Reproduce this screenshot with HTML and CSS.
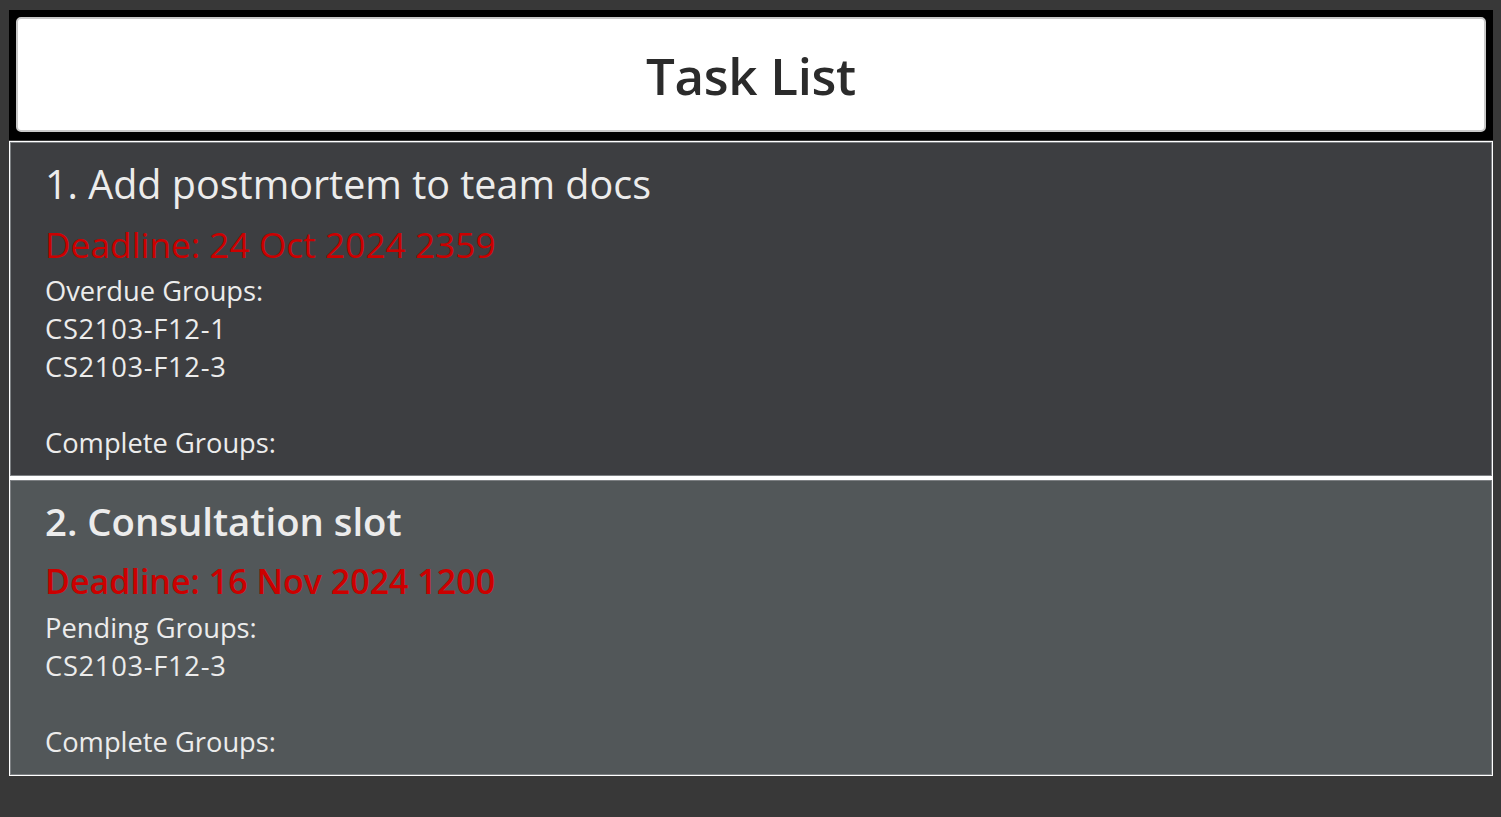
FILE: index.html
```html
<!DOCTYPE html>
<html>
<head>
<meta charset="utf-8">
<link rel="stylesheet" href="styles.css">
</head>
<body>
<div class="app">
  <div class="header-wrap">
    <div class="header">Task List</div>
  </div>
  <div class="list">
    <div class="card card-dark">
      <div class="title title-regular">1. Add postmortem to team docs</div>
      <div class="deadline deadline-regular">Deadline: 24 Oct 2024 2359</div>
      <div class="body">
        <div class="line">Overdue Groups:</div>
        <div class="line code">CS2103-F12-1</div>
        <div class="line code">CS2103-F12-3</div>
        <div class="line">&nbsp;</div>
        <div class="line">Complete Groups:</div>
      </div>
    </div>
    <div class="card card-light">
      <div class="title title-bold">2. Consultation slot</div>
      <div class="deadline deadline-bold">Deadline: 16 Nov 2024 1200</div>
      <div class="body">
        <div class="line">Pending Groups:</div>
        <div class="line code">CS2103-F12-3</div>
        <div class="line">&nbsp;</div>
        <div class="line">Complete Groups:</div>
      </div>
    </div>
  </div>
</div>
</body>
</html>
```
FILE: styles.css
```css
html, body {
  margin: 0;
  padding: 0;
  background: #383838;
  font-family: "Open Sans", "Noto Sans", sans-serif;
}

.app {
  padding: 10px 8px 0 9px;
  display: flex;
  flex-direction: column;
  gap: 1px;
}

.header-wrap {
  background: #000;
  padding: 7px 7px 8px 7px;
}

.header {
  height: 111px;
  background: #fff;
  border: 2px solid #c9c9c9;
  border-radius: 5px;
  box-sizing: content-box;
  display: flex;
  align-items: center;
  justify-content: center;
  color: #2b2b2b;
  font-size: 51px;
  font-weight: 600;
  letter-spacing: -0.3px;
}

.list {
  background: #fff;
  border: 1px solid #fff;
  display: flex;
  flex-direction: column;
  gap: 4px;
}

.card {
  border: 1px solid #7d8083;
  padding: 16px 33px 13px 34px;
  color: #ececec;
}

.card-dark {
  background: #3d3e41;
}

.card-light {
  background: #525759;
  padding-top: 15px;
  padding-bottom: 13px;
}

.title {
  font-size: 40px;
  line-height: 50px;
  white-space: nowrap;
}

.title-regular {
  font-size: 39.5px;
  font-weight: 500;
}

.title-bold {
  font-size: 38.3px;
  font-weight: 600;
}

.deadline {
  color: #cc0000;
  font-size: 35.3px;
  line-height: 46px;
  margin-top: 12px;
  margin-bottom: 5px;
  white-space: nowrap;
}

.deadline-regular {
  font-weight: 400;
}

.deadline-bold {
  font-size: 34px;
  font-weight: 600;
}

.body {
  font-size: 27.3px;
  line-height: 38px;
}

.line {
  white-space: nowrap;
}

.code {
  letter-spacing: 0.7px;
}
```
